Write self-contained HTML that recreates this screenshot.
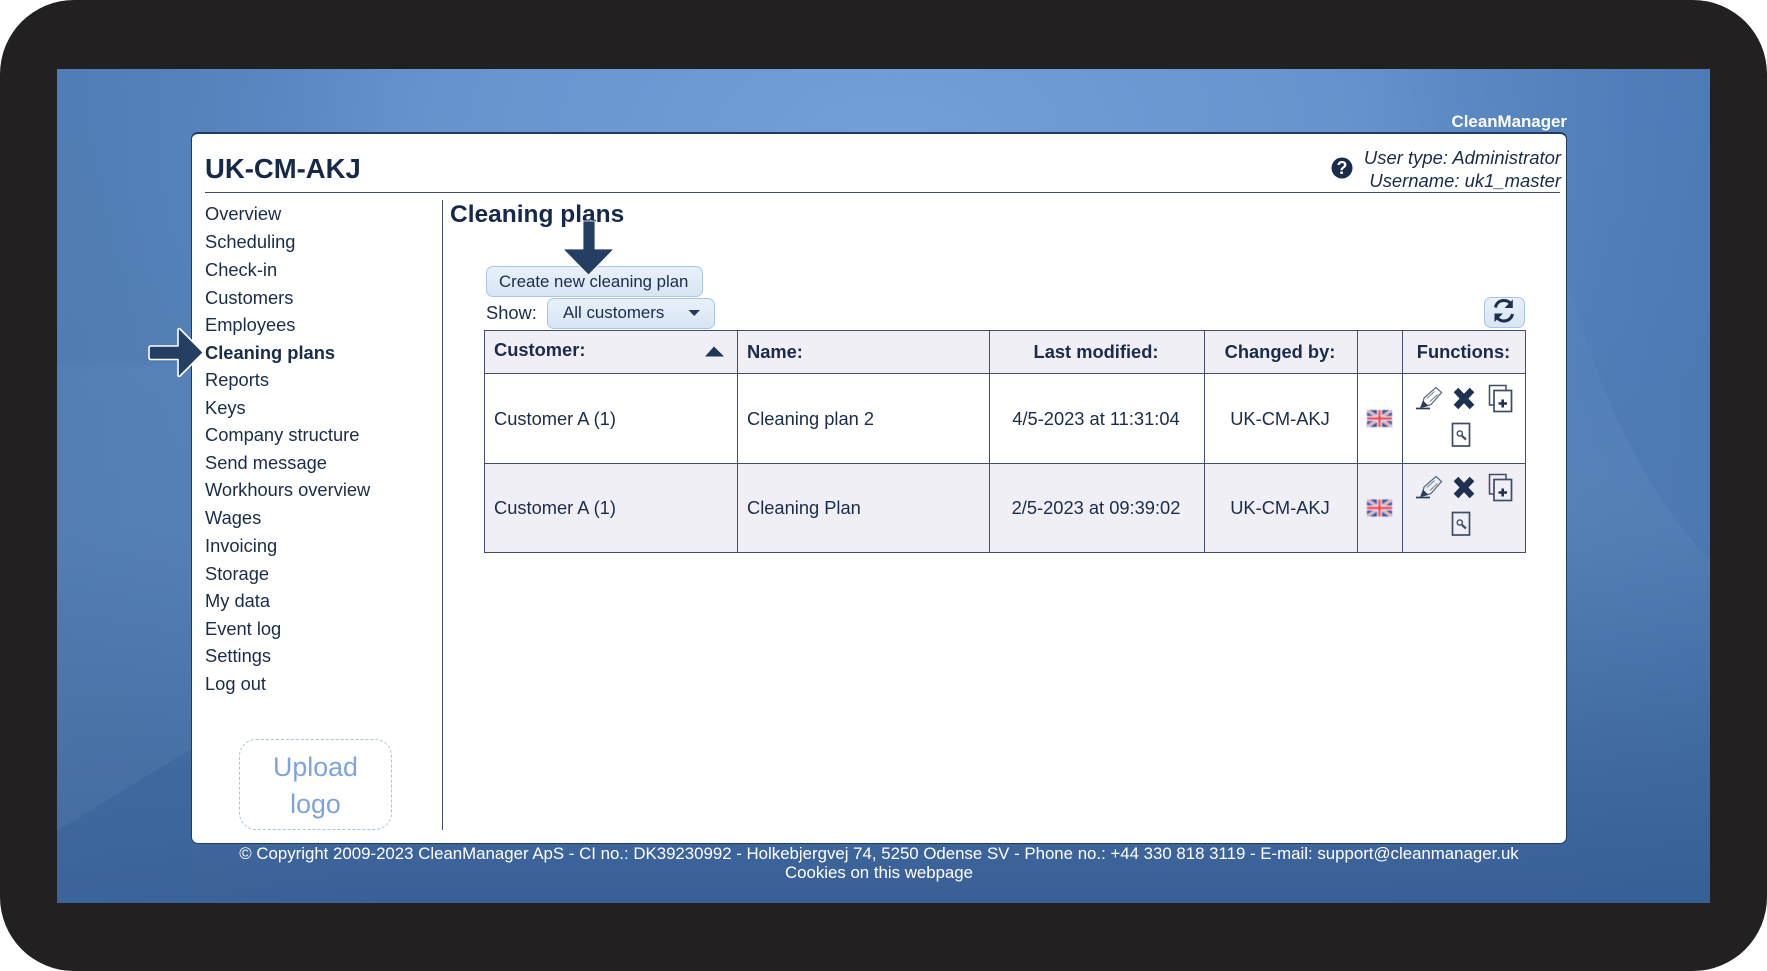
<!DOCTYPE html>
<html><head><meta charset="utf-8"><title>CleanManager</title>
<style>
html,body{margin:0;padding:0;background:#fff;width:1767px;height:971px;overflow:hidden}
body{font-family:"Liberation Sans",sans-serif;color:#1a2c49;font-size:18.3px;position:relative}
#frame{position:absolute;left:0;top:0;width:1767px;height:971px;background:#222021;border-radius:74px;overflow:hidden}
#bg{position:absolute;left:57px;top:69px;width:1653px;height:834px}
#card{position:absolute;left:191px;top:132px;width:1374px;height:709px;background:#fff;border:1px solid #1f3a63;border-top-width:2px;border-radius:7px;box-sizing:content-box}
.t{position:absolute;white-space:nowrap;line-height:20px}
.b{font-weight:bold}
.c{text-align:center}
.r{text-align:right}
.btn{position:absolute;box-sizing:border-box;background:linear-gradient(#e9f1fa,#d8e5f4);border:1.5px solid #a9c5ea;border-radius:7px}
.bar{position:absolute;background:#3f5068}
.row{position:absolute;background:#f0eff6}
#ov{position:absolute;left:0;top:0}
</style></head><body>
<div id="frame">
<svg id="bg" width="1653" height="834" viewBox="0 0 1653 834">
<defs>
<linearGradient id="g0" x1="0" y1="0" x2="0" y2="1"><stop offset="0" stop-color="#5583bf"/><stop offset=".55" stop-color="#5580b8"/><stop offset="1" stop-color="#395f96"/></linearGradient>
<radialGradient id="g1" gradientUnits="userSpaceOnUse" cx="830" cy="60" r="900" gradientTransform="translate(0 40) scale(1 .6)"><stop offset="0" stop-color="#72a0d8" stop-opacity="1"/><stop offset=".5" stop-color="#6a98d1" stop-opacity=".8"/><stop offset="1" stop-color="#5583bf" stop-opacity="0"/></radialGradient>
<linearGradient id="g2" x1="0" y1="0" x2="1" y2="0"><stop offset="0" stop-color="#47709f" stop-opacity=".3"/><stop offset=".2" stop-color="#47709f" stop-opacity="0"/><stop offset=".8" stop-color="#2f5d99" stop-opacity="0"/><stop offset="1" stop-color="#2f5d99" stop-opacity=".22"/></linearGradient>
<linearGradient id="g3" x1="0" y1="0" x2="0" y2="1"><stop offset="0" stop-color="#7ba2d2" stop-opacity=".05"/><stop offset=".3" stop-color="#7ba2d2" stop-opacity=".13"/><stop offset=".75" stop-color="#7ba2d2" stop-opacity="0"/></linearGradient>
<linearGradient id="g4" x1="0" y1="0" x2="0" y2="1"><stop offset="0" stop-color="#6b97cc" stop-opacity=".12"/><stop offset=".8" stop-color="#6b97cc" stop-opacity=".1"/></linearGradient>
</defs>
<rect width="1653" height="834" fill="url(#g0)"/>
<rect width="1653" height="834" fill="url(#g1)"/>
<rect width="1653" height="834" fill="url(#g2)"/>
<path d="M0 296H134V680L0 762Z" fill="url(#g4)"/>
<path d="M0 762L134 680V834H0Z" fill="#3a649f" opacity=".35"/>
<path d="M1510 210C1540 320 1590 430 1653 490V834H1510Z" fill="url(#g3)"/>
</svg>

<div id="card"></div>

<div class="t b" style="right:200px;top:112px;width:200px;text-align:right;color:#fff;font-size:16.9px">CleanManager</div>

<div class="t b" style="left:205px;top:158px;font-size:27.5px;line-height:22px;color:#16294a">UK-CM-AKJ</div>
<div class="bar" style="left:205px;top:192px;width:1355px;height:1px"></div>

<div class="t r" style="right:206px;top:148px;font-style:italic;font-size:18.45px">User type: Administrator</div>
<div class="t r" style="right:206px;top:171px;font-style:italic;font-size:18.45px">Username: uk1_master</div>
<div class="t b c" style="left:1332px;top:158px;width:20px;color:#fff;font-size:18px;z-index:3">?</div>

<div class="t" style="left:205px;top:204px">Overview</div>
<div class="t" style="left:205px;top:232px">Scheduling</div>
<div class="t" style="left:205px;top:260px">Check-in</div>
<div class="t" style="left:205px;top:288px">Customers</div>
<div class="t" style="left:205px;top:315px">Employees</div>
<div class="t b" style="left:205px;top:343px">Cleaning plans</div>
<div class="t" style="left:205px;top:370px">Reports</div>
<div class="t" style="left:205px;top:398px">Keys</div>
<div class="t" style="left:205px;top:425px">Company structure</div>
<div class="t" style="left:205px;top:453px">Send message</div>
<div class="t" style="left:205px;top:480px">Workhours overview</div>
<div class="t" style="left:205px;top:508px">Wages</div>
<div class="t" style="left:205px;top:536px">Invoicing</div>
<div class="t" style="left:205px;top:564px">Storage</div>
<div class="t" style="left:205px;top:591px">My data</div>
<div class="t" style="left:205px;top:619px">Event log</div>
<div class="t" style="left:205px;top:646px">Settings</div>
<div class="t" style="left:205px;top:674px">Log out</div>

<div style="position:absolute;left:239px;top:739px;width:153px;height:91px;box-sizing:border-box;border:1px dashed #a7c1ea;border-radius:17px"></div>
<div class="t c" style="left:239px;top:753px;width:153px;font-size:26.8px;line-height:28px;color:#7fa3db">Upload</div>
<div class="t c" style="left:239px;top:790px;width:153px;font-size:26.8px;line-height:28px;color:#7fa3db">logo</div>

<div class="bar" style="left:442px;top:200px;width:1px;height:630px"></div>
<div class="t b" style="left:450px;top:204px;font-size:24.5px;line-height:22px;color:#16294a">Cleaning plans</div>

<div class="btn" style="left:486px;top:266px;width:217px;height:31px"></div>
<div class="t" style="left:499px;top:272px;font-size:16.8px">Create new cleaning plan</div>
<div class="t" style="left:486px;top:303px">Show:</div>
<div class="btn" style="left:547px;top:298px;width:168px;height:31px"></div>
<div class="t" style="left:563px;top:303px;font-size:16.9px">All customers</div>
<div class="btn" style="left:1484px;top:297px;width:41px;height:31px"></div>

<div class="row" style="left:484px;top:330px;width:1041px;height:44px"></div>
<div class="row" style="left:484px;top:463px;width:1041px;height:90px"></div>
<div class="bar" style="left:484px;top:330px;width:1041px;height:1px"></div>
<div class="bar" style="left:484px;top:373px;width:1041px;height:1px"></div>
<div class="bar" style="left:484px;top:463px;width:1041px;height:1px"></div>
<div class="bar" style="left:484px;top:552px;width:1041px;height:1px"></div>
<div class="bar" style="left:484px;top:330px;width:1px;height:223px"></div>
<div class="bar" style="left:737px;top:330px;width:1px;height:223px"></div>
<div class="bar" style="left:989px;top:330px;width:1px;height:223px"></div>
<div class="bar" style="left:1204px;top:330px;width:1px;height:223px"></div>
<div class="bar" style="left:1357px;top:330px;width:1px;height:223px"></div>
<div class="bar" style="left:1402px;top:330px;width:1px;height:223px"></div>
<div class="bar" style="left:1525px;top:330px;width:1px;height:223px"></div>

<div class="t b" style="left:494px;top:340px">Customer:</div>
<div class="t b" style="left:747px;top:342px">Name:</div>
<div class="t b c" style="left:989px;top:342px;width:214px">Last modified:</div>
<div class="t b c" style="left:1204px;top:342px;width:152px">Changed by:</div>
<div class="t b c" style="left:1403px;top:342px;width:121px">Functions:</div>

<div class="t" style="left:494px;top:408.6px">Customer A (1)</div>
<div class="t" style="left:747px;top:408.6px">Cleaning plan 2</div>
<div class="t c" style="left:989px;top:408.6px;width:214px">4/5-2023 at 11:31:04</div>
<div class="t c" style="left:1204px;top:408.6px;width:152px">UK-CM-AKJ</div>

<div class="t" style="left:494px;top:498px">Customer A (1)</div>
<div class="t" style="left:747px;top:498px">Cleaning Plan</div>
<div class="t c" style="left:989px;top:498px;width:214px">2/5-2023 at 09:39:02</div>
<div class="t c" style="left:1204px;top:498px;width:152px">UK-CM-AKJ</div>

<div class="t c" style="left:0;top:844px;width:1758px;color:#fff;font-size:16.84px">© Copyright 2009-2023 CleanManager ApS - CI no.: DK39230992 - Holkebjergvej 74, 5250 Odense SV - Phone no.: +44 330 818 3119 - E-mail: support@cleanmanager.uk</div>
<div class="t c" style="left:0;top:863px;width:1758px;color:#fff;font-size:16.84px">Cookies on this webpage</div>

<svg id="ov" width="1767" height="971" viewBox="0 0 1767 971" style="z-index:2;pointer-events:none">
<defs>
<filter id="soft" x="-10%" y="-10%" width="120%" height="120%"><feGaussianBlur stdDeviation=".5"/></filter>
<g id="flag" filter="url(#soft)">
<rect x="0" y="0" width="25" height="17" fill="#3a56a4"/>
<path d="M0 0L25 17M25 0L0 17" stroke="#eef0f6" stroke-width="2.6"/>
<path d="M0 0L25 17M25 0L0 17" stroke="#e5596b" stroke-width=".8"/>
<path d="M12.5 0V17M0 8.5H25" stroke="#f8e6ea" stroke-width="4.8"/>
<path d="M12.5 0V17M0 8.5H25" stroke="#f04454" stroke-width="2.4"/>
</g>
<g id="fn" fill="none" stroke="#3d4d66">
<!-- pencil -->
<path d="M1416 408.5H1430" stroke="#2b3c58" stroke-width="1.7"/>
<path d="M1422 407L1424 398L1436 387.5L1441.5 392.5L1431 404.5Z" stroke="#626f85" stroke-width="1.3"/>
<path d="M1420 408L1423 400.5L1428.5 406Z" fill="#2b3c58" stroke="none"/>
<path d="M1427 398.5L1434.5 391.5M1430 401.5L1437.5 394.5" stroke="#7c8799" stroke-width="1.1"/>
<!-- X -->
<path d="M1456 390L1472 407M1472 390L1456 407" stroke="#1e3150" stroke-width="6.4"/>
<!-- copy -->
<path d="M1494 405H1489.5V385.5H1506V390" stroke-width="1.5"/>
<rect x="1494" y="390.5" width="17.5" height="21" stroke-width="1.7"/>
<path d="M1498.5 403.5H1507M1502.7 399.5V407.5" stroke="#1e3150" stroke-width="2.6"/>
<!-- doc with magnifier -->
<rect x="1452.5" y="423.5" width="17" height="22.5" stroke-width="1.7"/>
<circle cx="1459.8" cy="433.5" r="2.6" stroke-width="1.4"/>
<path d="M1462 436L1466 439.5" stroke-width="2.2"/>
</g>
</defs>
<!-- left arrow -->
<path d="M178 329.5Q178.5 328 180 329L203.5 352.5L180 376Q178.5 377 178 375.5V359.5H151Q149 359.5 149 357.5V348Q149 346 151 346H178Z" fill="#253f63" stroke="#fff" stroke-width="1.6" stroke-linejoin="round"/>
<!-- down arrow -->
<path d="M583 222Q583 221 584 221H594Q595 221 595 222V249H612Q613.5 249.5 612.5 250.5L588.5 275L564.5 250.5Q563.5 249.5 565 249H583Z" fill="#253f63" stroke="#fff" stroke-width=".8"/>
<!-- help -->
<circle cx="1342" cy="168" r="10.5" fill="#1a2c49"/>
<!-- select caret -->
<path d="M688.5 310H700L694.2 316Z" fill="#25395a"/>
<!-- sort caret -->
<path d="M705 356.5L714 346.5L724 356.5Z" fill="#1f3556"/>
<!-- refresh -->
<g transform="translate(-1 -1)">
<g fill="none" stroke="#1d2f4c" stroke-width="3.1">
<path d="M1496.5 308.5C1497.5 303.5 1501 301.5 1505 301.5C1508 301.5 1510.5 303 1512 305"/>
<path d="M1513.5 315C1512.5 319.5 1509 322 1505 322C1502 322 1499.5 320.5 1498 318.5"/>
</g>
<path d="M1513.8 300.5V309H1505.5Z" fill="#1d2f4c"/>
<path d="M1495.5 323V314.5H1504Z" fill="#1d2f4c"/>
</g>
<use href="#flag" x="1367" y="410"/>
<use href="#flag" x="1367" y="499.5"/>
<use href="#fn"/>
<use href="#fn" y="89"/>
</svg>
</div>
</body></html>
